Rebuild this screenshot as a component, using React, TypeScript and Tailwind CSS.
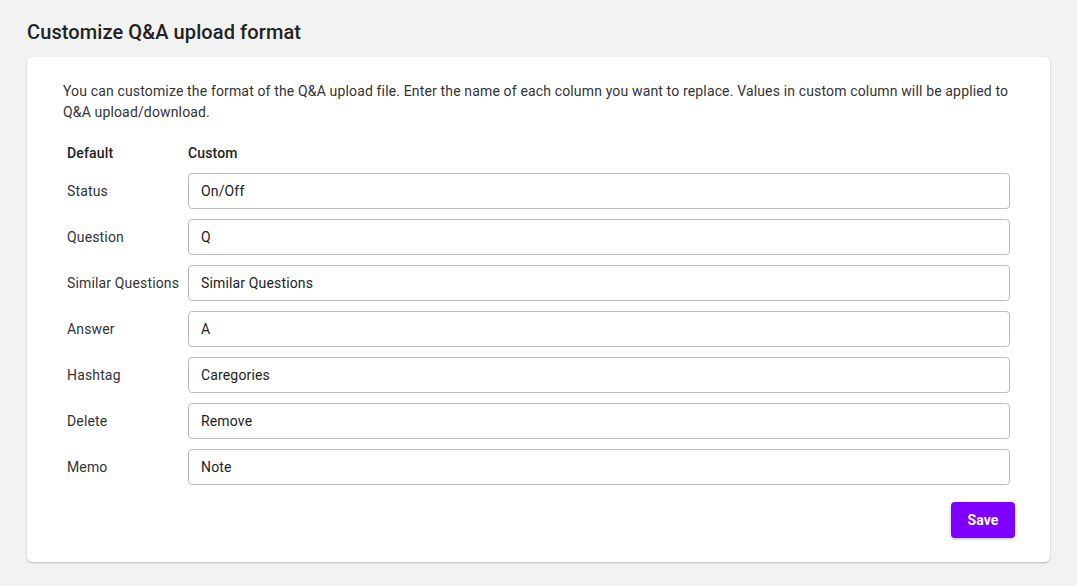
import React from "react"

const rows: [string, string][] = [
  ["Status", "On/Off"],
  ["Question", "Q"],
  ["Similar Questions", "Similar Questions"],
  ["Answer", "A"],
  ["Hashtag", "Caregories"],
  ["Delete", "Remove"],
  ["Memo", "Note"],
]

export default function App() {
  return (
    <div className="min-h-[586px] bg-[#f2f2f2] px-[27px] pt-[18px] pb-[24px] text-[#212121] font-['Roboto',sans-serif] tracking-[0.15px]">
      <h1 className="text-[20px] leading-[28px] font-medium text-[#222] tracking-[0.1px]">Customize Q&amp;A upload format</h1>
      <div className="mt-[11px] rounded-[5px] bg-white pl-[36px] pr-[35px] pt-[24px] pb-[24px] shadow-[0_1px_2px_rgba(0,0,0,0.25)]">
        <p className="text-[14px] leading-[21px] text-[#333]">
          You can customize the format of the Q&amp;A upload file. Enter the name of each column you want to replace. Values in
          custom column will be applied to Q&amp;A upload/download.
        </p>
        <div className="mt-[15px]">
          <div className="flex h-[30px] items-center text-[14px] font-medium">
            <div className="w-[125px] px-[4px]">Default</div>
            <div>Custom</div>
          </div>
          {rows.map(([label, value]) => (
            <div key={label} className="flex h-[46px] items-center text-[14px]">
              <div className="w-[125px] px-[4px] text-[#333]">{label}</div>
              <div className="flex-1 pr-[5px]">
                <input
                  defaultValue={value}
                  className="h-[36px] w-full rounded-[4px] border border-[#bdbdbd] px-[12px] text-[14px] text-[#222] tracking-[0.15px] outline-none"
                />
              </div>
            </div>
          ))}
        </div>
        <div className="mt-[12px] flex justify-end">
          <button className="h-[36px] w-[64px] rounded-[4px] bg-[#7f00ff] text-[14px] font-bold text-white shadow-[0_1px_3px_rgba(0,0,0,0.3)]">
            Save
          </button>
        </div>
      </div>
    </div>
  )
}
